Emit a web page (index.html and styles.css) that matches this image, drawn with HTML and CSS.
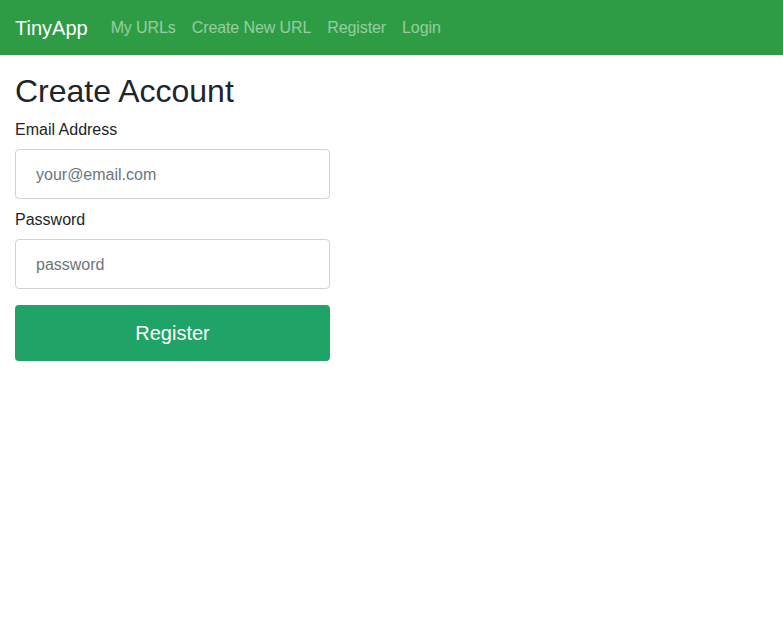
FILE: index.html
```html
<!DOCTYPE html>
<html>
<head>
<meta charset="utf-8">
<link rel="stylesheet" href="styles.css">
</head>
<body>
<nav class="navbar">
  <a class="brand" href="#">TinyApp</a>
  <ul class="nav-links">
    <li><a href="#">My URLs</a></li>
    <li><a href="#">Create New URL</a></li>
    <li><a href="#">Register</a></li>
    <li><a href="#">Login</a></li>
  </ul>
</nav>
<main class="container">
  <h2 class="title">Create Account</h2>
  <form class="form">
    <label class="label" for="email">Email Address</label>
    <input class="input" id="email" type="email" placeholder="your@email.com">
    <label class="label" for="password">Password</label>
    <input class="input" id="password" type="password" placeholder="password">
    <button class="btn" type="button">Register</button>
  </form>
</main>
</body>
</html>
```
FILE: styles.css
```css
* { box-sizing: border-box; }
html, body { margin: 0; padding: 0; }
body {
  font-family: "Liberation Sans", Arial, sans-serif;
  font-size: 16px;
  line-height: 1.5;
  color: #212529;
  background: #fff;
}
.navbar {
  height: 55px;
  background: #2e9c44;
  display: flex;
  align-items: center;
  padding: 0 15px;
}
.brand {
  color: #fff;
  font-size: 20px;
  text-decoration: none;
  margin-right: 15px;
}
.nav-links {
  display: flex;
  list-style: none;
  margin: 0;
  padding: 0;
}
.nav-links a {
  display: block;
  padding: 8px;
  color: rgba(255,255,255,0.5);
  text-decoration: none;
  letter-spacing: -0.1px;
}
.container { padding: 0 15px; }
.title {
  font-size: 32px;
  font-weight: 500;
  line-height: 1.2;
  margin: 17px 0 7px;
}
.form {
  display: flex;
  flex-direction: column;
  width: 315px;
}
.label {
  padding-top: 1px;
  margin-bottom: 7px;
}
.input {
  height: 50px;
  padding: 2px 20px 0;
  font-family: inherit;
  font-size: 16px;
  color: #495057;
  border: 1px solid #ced4da;
  border-radius: 4px;
  margin-bottom: 8px;
}
.input::placeholder { color: #6c757d; }
.btn {
  margin-top: 8px;
  height: 56px;
  background: #1fa366;
  border: none;
  border-radius: 4px;
  color: #fff;
  font-family: inherit;
  font-size: 20px;
}
```
